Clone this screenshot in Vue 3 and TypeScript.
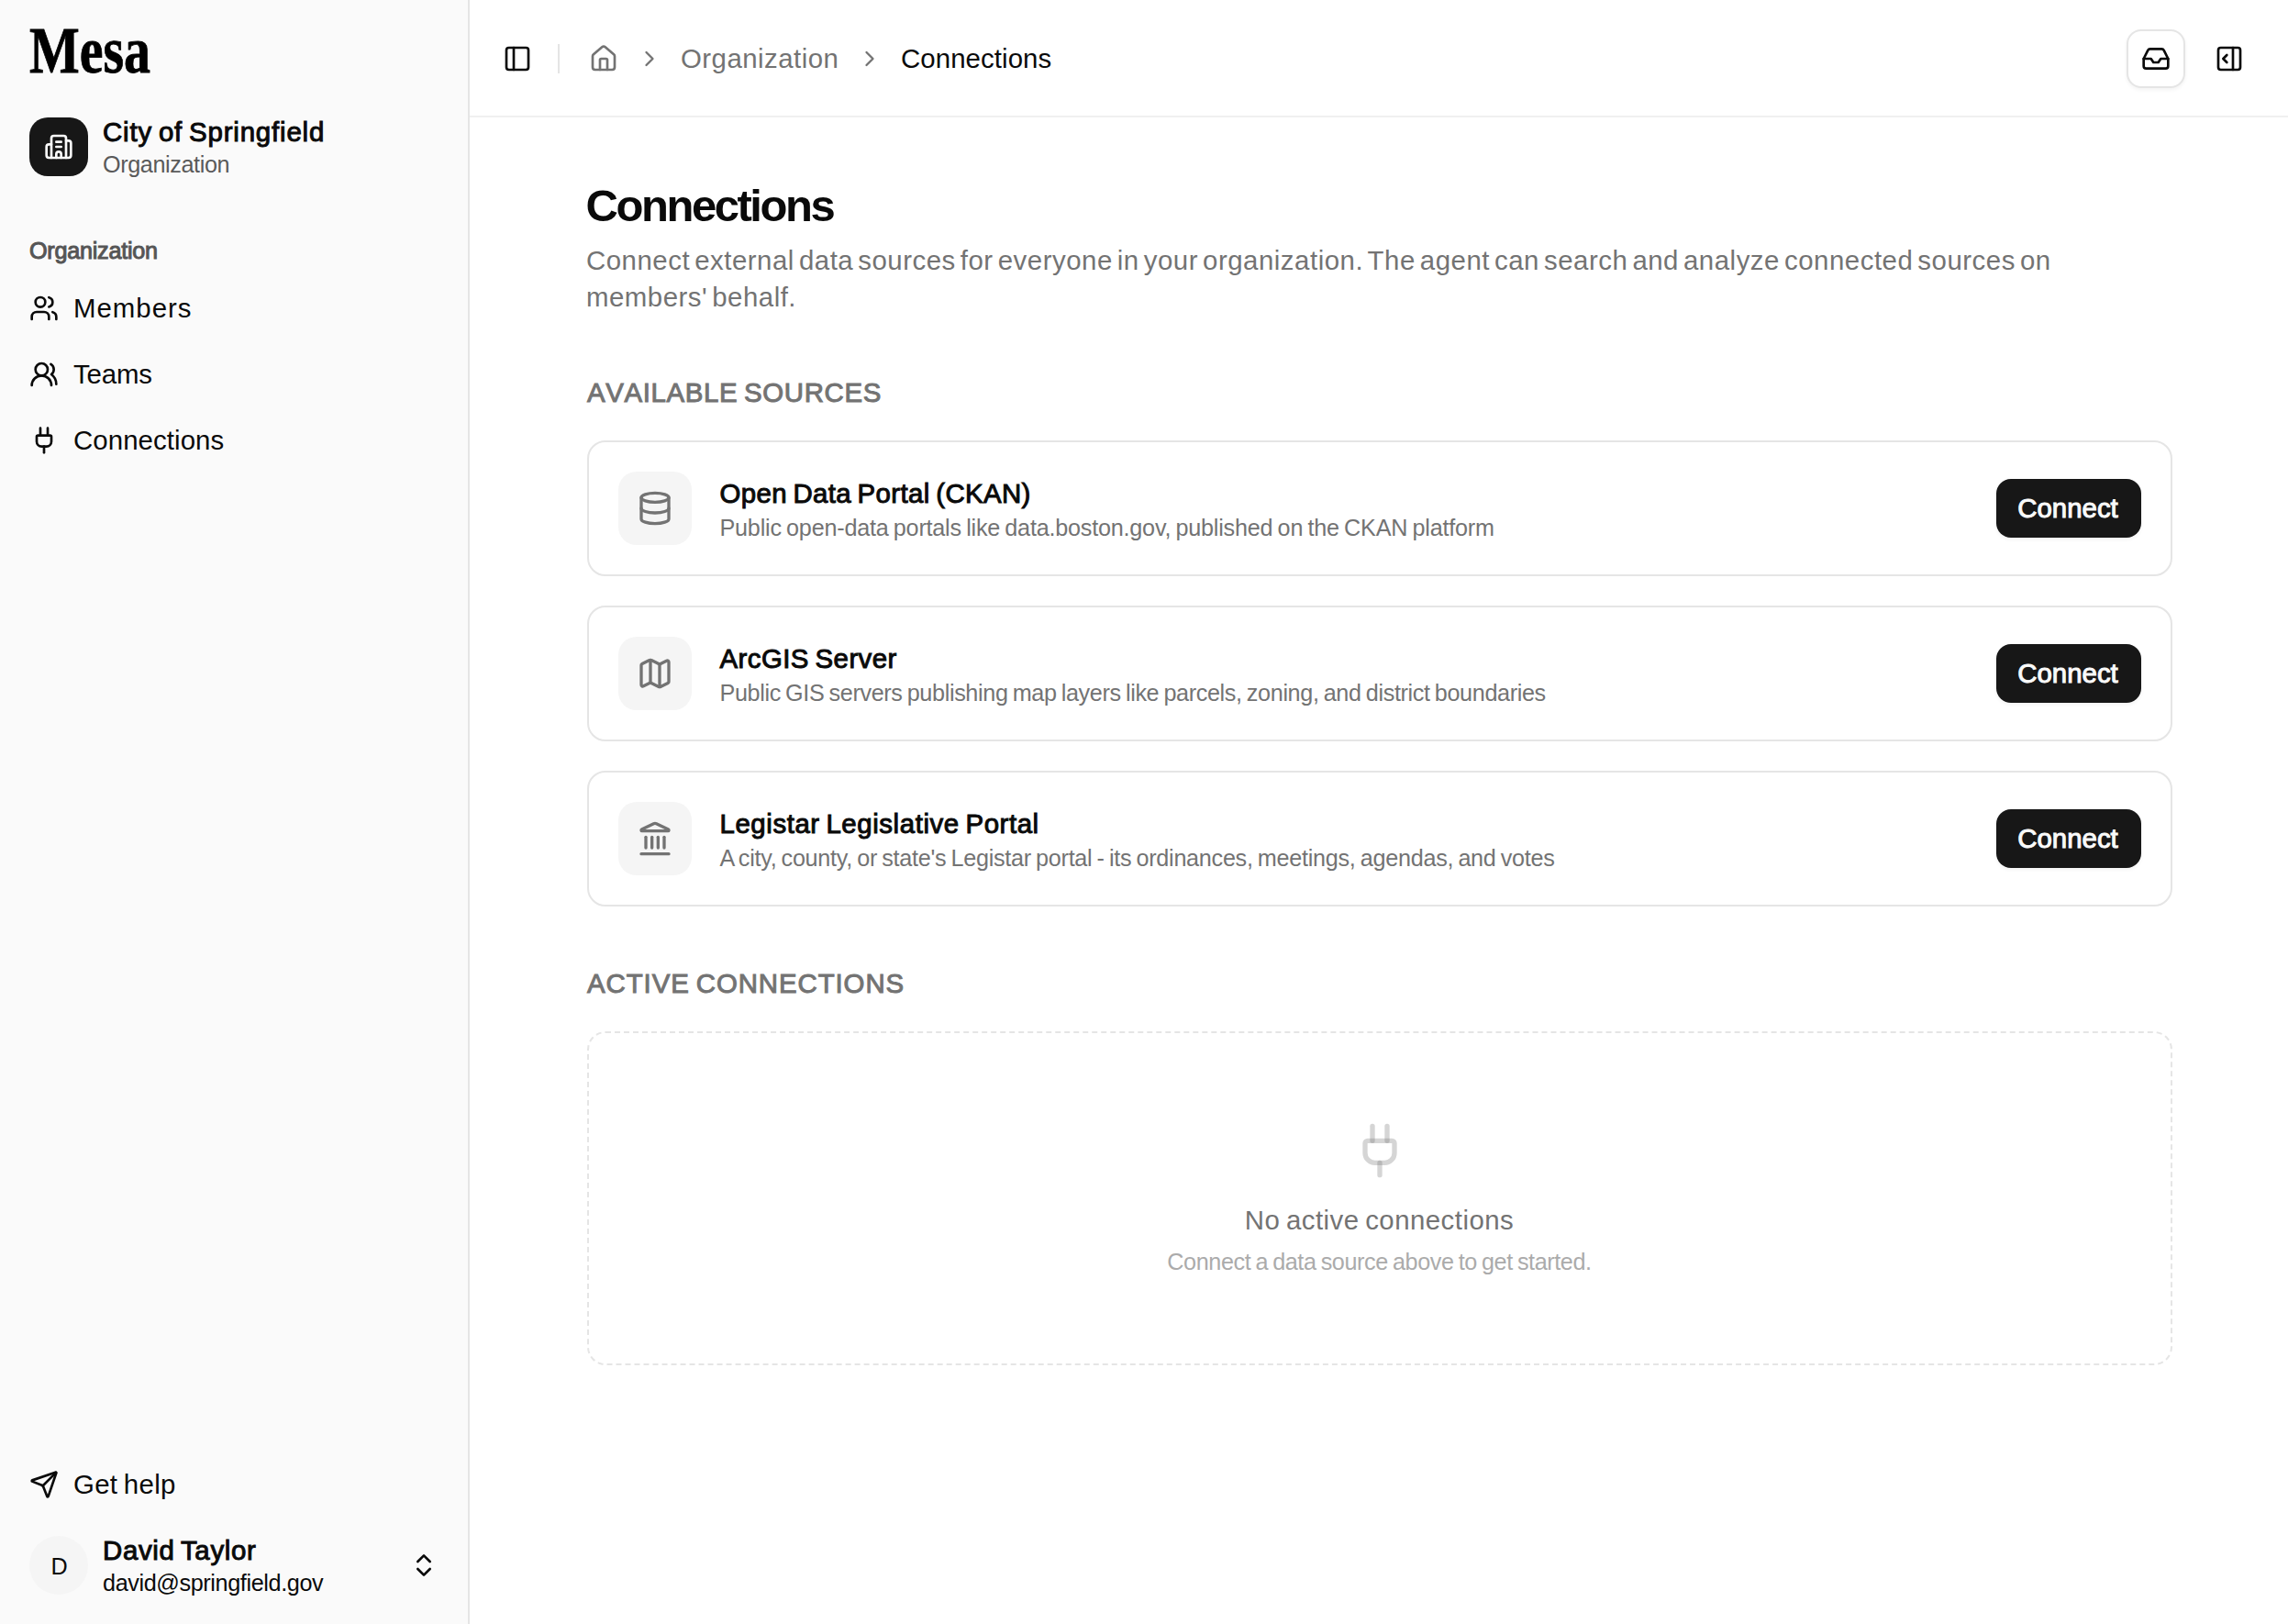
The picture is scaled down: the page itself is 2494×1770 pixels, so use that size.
<script setup lang="ts">
import { h, type FunctionalComponent } from 'vue'

type IconName =
  | 'building' | 'users' | 'usersRound' | 'plug' | 'send' | 'chevronsUpDown' | 'panelLeft' | 'house'
  | 'chevronRight' | 'inbox' | 'panelRightOpen' | 'database' | 'map' | 'landmark'

const icons: Record<IconName, string[]> = {
  building: [
    'M10 12h4', 'M10 8h4', 'M14 21v-3a2 2 0 0 0-4 0v3',
    'M6 10H4a2 2 0 0 0-2 2v7a2 2 0 0 0 2 2h16a2 2 0 0 0 2-2V9a2 2 0 0 0-2-2h-2',
    'M6 21V5a2 2 0 0 1 2-2h8a2 2 0 0 1 2 2v16',
  ],
  users: [
    'M16 21v-2a4 4 0 0 0-4-4H6a4 4 0 0 0-4 4v2', 'M16 3.128a4 4 0 0 1 0 7.744',
    'M22 21v-2a4 4 0 0 0-3-3.87', 'M5 7a4 4 0 1 0 8 0a4 4 0 1 0-8 0',
  ],
  usersRound: ['M18 21a8 8 0 0 0-16 0', 'M5 8a5 5 0 1 0 10 0a5 5 0 1 0-10 0', 'M22 20c0-3.37-2-6.5-4-8a5 5 0 0 0-.45-8.3'],
  plug: [
    'M12 22v-5', 'M15 8V2', 'M17 8a1 1 0 0 1 1 1v4a4 4 0 0 1-4 4h-4a4 4 0 0 1-4-4V9a1 1 0 0 1 1-1z', 'M9 8V2',
  ],
  send: [
    'M14.536 21.686a.5.5 0 0 0 .937-.024l6.5-19a.496.496 0 0 0-.635-.635l-19 6.5a.5.5 0 0 0-.024.937l7.93 3.18a2 2 0 0 1 1.112 1.11z',
    'm21.854 2.147-10.94 10.939',
  ],
  chevronsUpDown: ['m7 15 5 5 5-5', 'm7 9 5-5 5 5'],
  panelLeft: ['M5 3h14a2 2 0 0 1 2 2v14a2 2 0 0 1-2 2H5a2 2 0 0 1-2-2V5a2 2 0 0 1 2-2z', 'M9 3v18'],
  house: [
    'M15 21v-8a1 1 0 0 0-1-1h-4a1 1 0 0 0-1 1v8',
    'M3 10a2 2 0 0 1 .709-1.528l7-5.999a2 2 0 0 1 2.582 0l7 5.999A2 2 0 0 1 21 10v9a2 2 0 0 1-2 2H5a2 2 0 0 1-2-2z',
  ],
  chevronRight: ['m9 18 6-6-6-6'],
  inbox: [
    'M22 12h-6l-2 3h-4l-2-3H2',
    'M5.45 5.11 2 12v6a2 2 0 0 0 2 2h16a2 2 0 0 0 2-2v-6l-3.45-6.89A2 2 0 0 0 16.76 4H7.24a2 2 0 0 0-1.79 1.11z',
  ],
  panelRightOpen: ['M5 3h14a2 2 0 0 1 2 2v14a2 2 0 0 1-2 2H5a2 2 0 0 1-2-2V5a2 2 0 0 1 2-2z', 'M15 3v18', 'm10 15-3-3 3-3'],
  database: ['M3 5a9 3 0 1 0 18 0a9 3 0 1 0-18 0', 'M3 5V19A9 3 0 0 0 21 19V5', 'M3 12A9 3 0 0 0 21 12'],
  map: [
    'M14.106 5.553a2 2 0 0 0 1.788 0l3.659-1.83A1 1 0 0 1 21 4.619v12.764a1 1 0 0 1-.553.894l-4.553 2.277a2 2 0 0 1-1.788 0l-4.212-2.106a2 2 0 0 0-1.788 0l-3.659 1.83A1 1 0 0 1 3 19.381V6.618a1 1 0 0 1 .553-.894l4.553-2.277a2 2 0 0 1 1.788 0z',
    'M15 5.764v15', 'M9 3.236v15',
  ],
  landmark: [
    'M10 18v-7',
    'M11.12 2.198a2 2 0 0 1 1.76.006l7.866 3.847c.476.233.31.949-.22.949H3.474c-.53 0-.695-.716-.22-.949z',
    'M14 18v-7', 'M18 18v-7', 'M3 22h18', 'M6 18v-7',
  ],
}

const Icon: FunctionalComponent<{ name: IconName; size?: number }> = ({ name, size = 32 }) =>
  h(
    'svg',
    {
      width: size, height: size, viewBox: '0 0 24 24', fill: 'none', stroke: 'currentColor',
      'stroke-width': 2, 'stroke-linecap': 'round', 'stroke-linejoin': 'round', 'aria-hidden': 'true',
    },
    icons[name].map((d) => h('path', { d })),
  )
Icon.props = ['name', 'size']

const nav: { icon: IconName; label: string; key: string }[] = [
  { icon: 'users', label: 'Members', key: 'members' },
  { icon: 'usersRound', label: 'Teams', key: 'teams' },
  { icon: 'plug', label: 'Connections', key: 'connections' },
]

const sources: { icon: IconName; key: string; title: string; description: string }[] = [
  {
    icon: 'database', key: 'ckan', title: 'Open Data Portal (CKAN)',
    description: 'Public open-data portals like data.boston.gov, published on the CKAN platform',
  },
  {
    icon: 'map', key: 'arcgis', title: 'ArcGIS Server',
    description: 'Public GIS servers publishing map layers like parcels, zoning, and district boundaries',
  },
  {
    icon: 'landmark', key: 'legistar', title: 'Legistar Legislative Portal',
    description: "A city, county, or state's Legistar portal - its ordinances, meetings, agendas, and votes",
  },
]
</script>

<template>
  <div class="app">
    <aside class="sidebar">
      <svg class="logo" width="136" height="52" viewBox="0 0 136 52" role="img" aria-label="Mesa">
        <text x="0" y="47" textLength="132" lengthAdjust="spacingAndGlyphs" font-family="'Liberation Serif', serif" font-weight="700" font-size="71">Mesa</text>
      </svg>

      <div class="identity org">
        <span class="org-icon"><Icon name="building" /></span>
        <div class="identity-text">
          <span class="name medium">City of Springfield</span>
          <span class="sub muted">Organization</span>
        </div>
      </div>

      <div class="group-label medium">Organization</div>
      <nav class="nav">
        <a v-for="item in nav" :key="item.key" class="nav-item" :class="item.key">
          <Icon :name="item.icon" /><span>{{ item.label }}</span>
        </a>
      </nav>

      <div class="footer">
        <a class="nav-item help"><Icon name="send" /><span>Get help</span></a>
        <div class="identity user">
          <span class="avatar">D</span>
          <div class="identity-text">
            <span class="name medium">David Taylor</span>
            <span class="sub">david@springfield.gov</span>
          </div>
          <Icon class="updown" name="chevronsUpDown" />
        </div>
      </div>
    </aside>

    <div class="content">
      <header class="topbar">
        <button class="icon-button"><Icon name="panelLeft" /></button>
        <span class="separator"></span>
        <div class="crumbs">
          <Icon name="house" />
          <Icon name="chevronRight" :size="28" />
          <span class="crumb-org">Organization</span>
          <Icon name="chevronRight" :size="28" />
          <span class="crumb-page">Connections</span>
        </div>
        <div class="actions">
          <button class="icon-button outlined"><Icon name="inbox" /></button>
          <button class="icon-button"><Icon name="panelRightOpen" /></button>
        </div>
      </header>

      <main class="main">
        <h1>Connections</h1>
        <p class="lead">
          <span class="lead-first">Connect external data sources for everyone in your organization. The agent can search and analyze connected sources on</span>
          <span class="lead-last">members' behalf.</span>
        </p>

        <section>
          <h2 class="medium available">AVAILABLE SOURCES</h2>
          <div class="cards">
            <article v-for="source in sources" :key="source.key" class="card" :class="source.key">
              <span class="card-icon"><Icon :name="source.icon" :size="40" /></span>
              <div class="card-text">
                <h3 class="medium">{{ source.title }}</h3>
                <p>{{ source.description }}</p>
              </div>
              <button class="connect">Connect</button>
            </article>
          </div>
        </section>

        <section>
          <h2 class="medium active">ACTIVE CONNECTIONS</h2>
          <div class="empty">
            <Icon class="empty-icon" name="plug" :size="64" />
            <p class="empty-title">No active connections</p>
            <p class="empty-hint">Connect a data source above to get started.</p>
          </div>
        </section>
      </main>
    </div>
  </div>
</template>

<style>
body {
  margin: 0;
  background: #fff;
}
</style>

<style scoped>
.app {
  display: flex;
  width: 2494px;
  height: 1770px;
  overflow: hidden;
  color: #0a0a0a;
  background: #fff;
  font-family: 'Liberation Sans', Arial, sans-serif;
  font-size: 29.4px;
  line-height: 40px;
  word-spacing: -2px;
}
h1, h2, h3, p {
  margin: 0;
  font-weight: 400;
}
svg {
  display: block;
  flex: none;
}
button {
  border: 0;
  padding: 0;
  background: none;
  color: inherit;
  font: inherit;
}
/* weight between regular and bold */
.medium {
  -webkit-text-stroke: 1px currentColor;
}

.sidebar {
  box-sizing: border-box;
  display: flex;
  flex-direction: column;
  flex: none;
  width: 512px;
  padding: 32px;
  background: #fafafa;
  border-right: 2px solid #e5e5e5;
}
.logo {
  height: 52px;
  margin-bottom: 44px;
  fill: #000;
  stroke: #000;
  stroke-width: 0.8px;
  word-spacing: 0;
  overflow: visible;
}
.identity {
  display: flex;
  align-items: center;
  gap: 16px;
  height: 64px;
}
.identity-text {
  display: flex;
  flex-direction: column;
}
.identity-text span {
  white-space: nowrap;
}
.name {
  line-height: 38px;
}
.sub {
  font-size: 25.2px;
  line-height: 33px;
}
.muted {
  color: #5a5a5a;
}
.org .name { letter-spacing: 0.83px; }
.org .sub { letter-spacing: -0.39px; }
.user .name { letter-spacing: 0.7px; }
.user .sub { letter-spacing: -0.38px; }
.org-icon {
  display: flex;
  align-items: center;
  justify-content: center;
  width: 64px;
  height: 64px;
  border-radius: 20px;
  background: #171717;
  color: #fafafa;
}
.group-label {
  margin-top: 61px;
  padding-bottom: 7px;
  font-size: 25.2px;
  line-height: 40px;
  letter-spacing: -0.25px;
  color: #555;
}
.nav {
  display: flex;
  flex-direction: column;
}
.nav-item {
  display: flex;
  align-items: center;
  gap: 16px;
  height: 72px;
}
.members { letter-spacing: 1px; }
.teams { letter-spacing: -0.15px; }
.connections { letter-spacing: 0.08px; }
.help { letter-spacing: 0.33px; }
.footer {
  display: flex;
  flex-direction: column;
  gap: 20px;
  margin-top: auto;
}
.avatar {
  box-sizing: border-box;
  display: flex;
  align-items: center;
  justify-content: center;
  width: 64px;
  height: 64px;
  padding: 1px 0 0 1px;
  border-radius: 50%;
  background: #f5f5f5;
  font-size: 25.2px;
}
.updown {
  margin-left: auto;
}

.content {
  display: flex;
  flex-direction: column;
  flex: 1;
  min-width: 0;
}
.topbar {
  box-sizing: border-box;
  display: flex;
  align-items: center;
  height: 128px;
  padding: 2px 32px 0 20px;
  border-bottom: 2px solid #f0f0f0;
}
.icon-button {
  box-sizing: border-box;
  display: flex;
  align-items: center;
  justify-content: center;
  width: 64px;
  height: 64px;
  border-radius: 16px;
}
.outlined {
  border: 2px solid #e5e5e5;
  background: #fff;
  box-shadow: 0 2px 4px rgba(0, 0, 0, 0.05);
}
.separator {
  width: 2px;
  height: 32px;
  margin: 0 32px 0 12px;
  background: #e5e5e5;
}
.crumbs {
  display: flex;
  align-items: center;
  gap: 20px;
  color: #737373;
}
.crumb-org {
  width: 172px;
  letter-spacing: 0.47px;
}
.crumb-page {
  color: #0a0a0a;
  letter-spacing: 0.08px;
}
.actions {
  display: flex;
  gap: 16px;
  margin-left: auto;
}

.main {
  padding: 64px 126px 0 128px;
}
h1 {
  margin-left: -1.5px;
  font-size: 49px;
  font-weight: 700;
  line-height: 64px;
  letter-spacing: -2.45px;
}
.lead {
  margin: 8px 0 0 -1px;
  color: #737373;
}
.lead span {
  display: block;
  white-space: nowrap;
}
.lead-first {
  letter-spacing: 0.52px;
  word-spacing: -3.65px;
}
.lead-last {
  letter-spacing: 0.5px;
  word-spacing: -3.5px;
}
section {
  margin-top: 64px;
}
h2 {
  font-size: 29.4px;
  line-height: 40px;
  color: #737373;
}
.available {
  font-kerning: none;
  letter-spacing: 0.64px;
}
.active { letter-spacing: 0.92px; }
.cards {
  display: flex;
  flex-direction: column;
  gap: 32px;
  margin-top: 32px;
}
.card {
  box-sizing: border-box;
  display: flex;
  align-items: center;
  height: 148px;
  padding: 0 32px;
  border: 2px solid #e5e5e5;
  border-radius: 20px;
}
.card-icon {
  display: flex;
  align-items: center;
  justify-content: center;
  width: 80px;
  height: 80px;
  border-radius: 20px;
  background: #f5f5f5;
  color: #737373;
}
.card-text {
  flex: 1;
  margin-left: 30.5px;
}
h3 {
  font-size: 29.4px;
  line-height: 42px;
}
.card-text p {
  font-size: 25.2px;
  line-height: 33px;
  word-spacing: -1.5px;
  color: #737373;
}
.ckan h3 { letter-spacing: 0.38px; }
.arcgis h3 { letter-spacing: 0.45px; }
.legistar h3 { letter-spacing: 0.58px; }
.ckan p { letter-spacing: -0.22px; }
.arcgis p { letter-spacing: -0.36px; }
.legistar p { letter-spacing: -0.28px; }
.connect {
  width: 158px;
  height: 64px;
  padding-right: 2px;
  border-radius: 16px;
  background: #171717;
  color: #fafafa;
  letter-spacing: 0.02px;
  -webkit-text-stroke: 1px currentColor;
  box-shadow: 0 2px 4px rgba(0, 0, 0, 0.05);
}
.empty {
  box-sizing: border-box;
  display: flex;
  flex-direction: column;
  align-items: center;
  height: 364px;
  margin-top: 32px;
  padding-top: 96px;
  border: 2px dashed #e5e5e5;
  border-radius: 20px;
}
.empty-icon {
  color: rgba(115, 115, 115, 0.3);
}
.empty-title {
  margin: 24px 1px 0 0;
  color: #737373;
  letter-spacing: 0.47px;
}
.empty-hint {
  margin: 8px 1px 0 0;
  font-size: 25.2px;
  line-height: 34px;
  word-spacing: -1.5px;
  color: #ababab;
  letter-spacing: -0.4px;
}
</style>
